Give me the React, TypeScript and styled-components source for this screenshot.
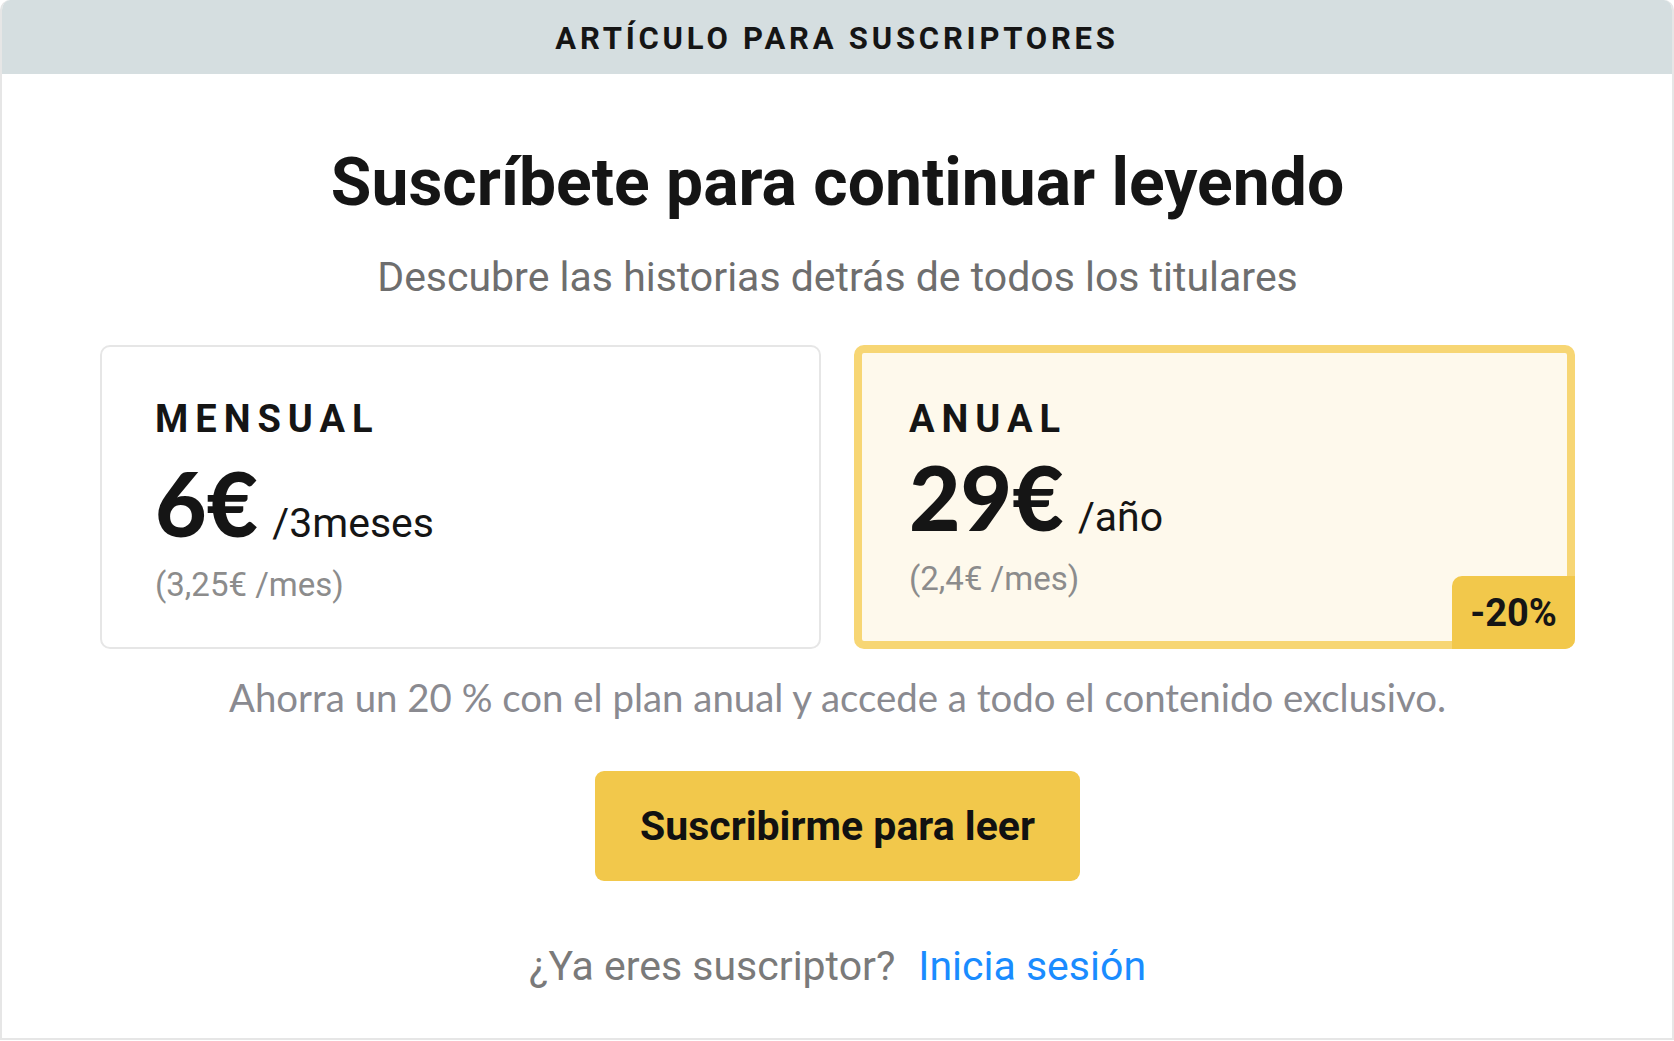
import React from "react";
import styled, { createGlobalStyle } from "styled-components";

const GlobalStyle = createGlobalStyle`
  html, body {
    margin: 0;
    padding: 0;
    background: #ffffff;
  }
  body {
    font-family: Roboto, "Liberation Sans", Arial, sans-serif;
    color: #151515;
  }
  * { box-sizing: border-box; }
`;

const Panel = styled.section`
  height: 1040px;
  border: 2px solid #e6e6e6;
  border-top: 0;
  border-radius: 10px 10px 0 0;
  overflow: hidden;
  display: flex;
  flex-direction: column;
  background: #ffffff;
`;

const Header = styled.header`
  height: 74px;
  margin: 0 -2px;
  background: #d5dee0;
  display: flex;
  align-items: center;
  justify-content: center;
  padding-top: 2px;
  font-family: Roboto, sans-serif;
  font-weight: 700;
  font-size: 31px;
  letter-spacing: 3.8px;
  color: #151515;
  text-transform: uppercase;
`;

const Main = styled.main`
  display: flex;
  flex-direction: column;
  align-items: center;
  padding: 70px 97px 0 98px;
`;

const Title = styled.h1`
  margin: 0;
  font-family: Roboto, sans-serif;
  font-weight: 700;
  font-size: 66px;
  line-height: 78px;
  color: #151515;
  text-align: center;
`;

const Subtitle = styled.p`
  margin: 31px 0 0;
  font-family: Roboto, sans-serif;
  font-weight: 400;
  font-size: 41px;
  line-height: 49px;
  color: #6e6e6e;
  text-align: center;
`;

const Plans = styled.div`
  margin-top: 43px;
  width: 100%;
  display: grid;
  grid-template-columns: 1fr 1fr;
  gap: 33px;
`;

const PlanCard = styled.div<{ $featured?: boolean }>`
  position: relative;
  height: 304px;
  border-radius: 10px;
  border: ${(p) => (p.$featured ? "8px solid #f7d674" : "2px solid #e6e6e6")};
  background: ${(p) => (p.$featured ? "#fef9ec" : "#ffffff")};
  padding: ${(p) => (p.$featured ? "47px 47px 0" : "53px 53px 0")};
  display: flex;
  flex-direction: column;
  align-items: flex-start;
`;

const PlanName = styled.div`
  font-family: Roboto, sans-serif;
  font-weight: 700;
  font-size: 38px;
  line-height: 38px;
  letter-spacing: 7px;
  color: #151515;
`;

const PriceRow = styled.div<{ $lift?: number }>`
  display: flex;
  align-items: baseline;
  margin-top: ${(p) => 20 - (p.$lift ?? 0)}px;
`;

const Price = styled.span`
  font-family: Lato, "Noto Sans", sans-serif;
  font-weight: 900;
  font-size: 89px;
  line-height: 89px;
  color: #151515;
`;

const Period = styled.span`
  margin-left: 14px;
  font-family: Roboto, sans-serif;
  font-weight: 400;
  font-size: 41px;
  color: #151515;
`;

const Monthly = styled.div`
  margin-top: 18px;
  font-family: Roboto, sans-serif;
  font-weight: 400;
  font-size: 33px;
  line-height: 40px;
  color: #8c8c8c;
`;

const Badge = styled.div`
  position: absolute;
  right: -8px;
  bottom: -8px;
  width: 123px;
  height: 73px;
  border-radius: 10px 0 10px 0;
  background: #f2c84b;
  display: flex;
  align-items: center;
  justify-content: center;
  font-family: Roboto, sans-serif;
  font-weight: 700;
  font-size: 38px;
  color: #151515;
`;

const Note = styled.p`
  margin: 25px 0 0;
  font-family: Lato, sans-serif;
  font-weight: 400;
  font-size: 38.4px;
  line-height: 46px;
  color: #8a8a90;
  text-align: center;
`;

const CtaButton = styled.button`
  margin-top: 51px;
  height: 110px;
  padding: 0 45px;
  border: 0;
  border-radius: 9px;
  background: #f2c84b;
  font-family: Roboto, sans-serif;
  font-weight: 700;
  font-size: 41px;
  color: #111111;
  cursor: pointer;
`;

const LoginLine = styled.p`
  margin: 61px 0 0;
  font-family: Roboto, sans-serif;
  font-weight: 400;
  font-size: 41px;
  line-height: 48px;
  color: #7a7a7a;
  text-align: center;
`;

const LoginLink = styled.a`
  margin-left: 23px;
  color: #1a8cff;
  text-decoration: none;
`;

type Plan = {
  name: string;
  price: string;
  period: string;
  monthly: string;
  featured?: boolean;
  badge?: string;
  lift?: number;
};

const plans: Plan[] = [
  { name: "Mensual", price: "6€", period: "/3meses", monthly: "(3,25€ /mes)" },
  {
    name: "Anual",
    price: "29€",
    period: "/año",
    monthly: "(2,4€ /mes)",
    featured: true,
    badge: "-20%",
    lift: 6,
  },
];

export default function App() {
  return (
    <>
      <GlobalStyle />
      <Panel>
        <Header>Artículo para suscriptores</Header>
        <Main>
          <Title>Suscríbete para continuar leyendo</Title>
          <Subtitle>Descubre las historias detrás de todos los titulares</Subtitle>
          <Plans>
            {plans.map((p) => (
              <PlanCard key={p.name} $featured={p.featured}>
                <PlanName>{p.name.toUpperCase()}</PlanName>
                <PriceRow $lift={p.lift}>
                  <Price>{p.price}</Price>
                  <Period>{p.period}</Period>
                </PriceRow>
                <Monthly>{p.monthly}</Monthly>
                {p.badge && <Badge>{p.badge}</Badge>}
              </PlanCard>
            ))}
          </Plans>
          <Note>Ahorra un 20 % con el plan anual y accede a todo el contenido exclusivo.</Note>
          <CtaButton type="button">Suscribirme para leer</CtaButton>
          <LoginLine>
            ¿Ya eres suscriptor?
            <LoginLink href="#">Inicia sesión</LoginLink>
          </LoginLine>
        </Main>
      </Panel>
    </>
  );
}
